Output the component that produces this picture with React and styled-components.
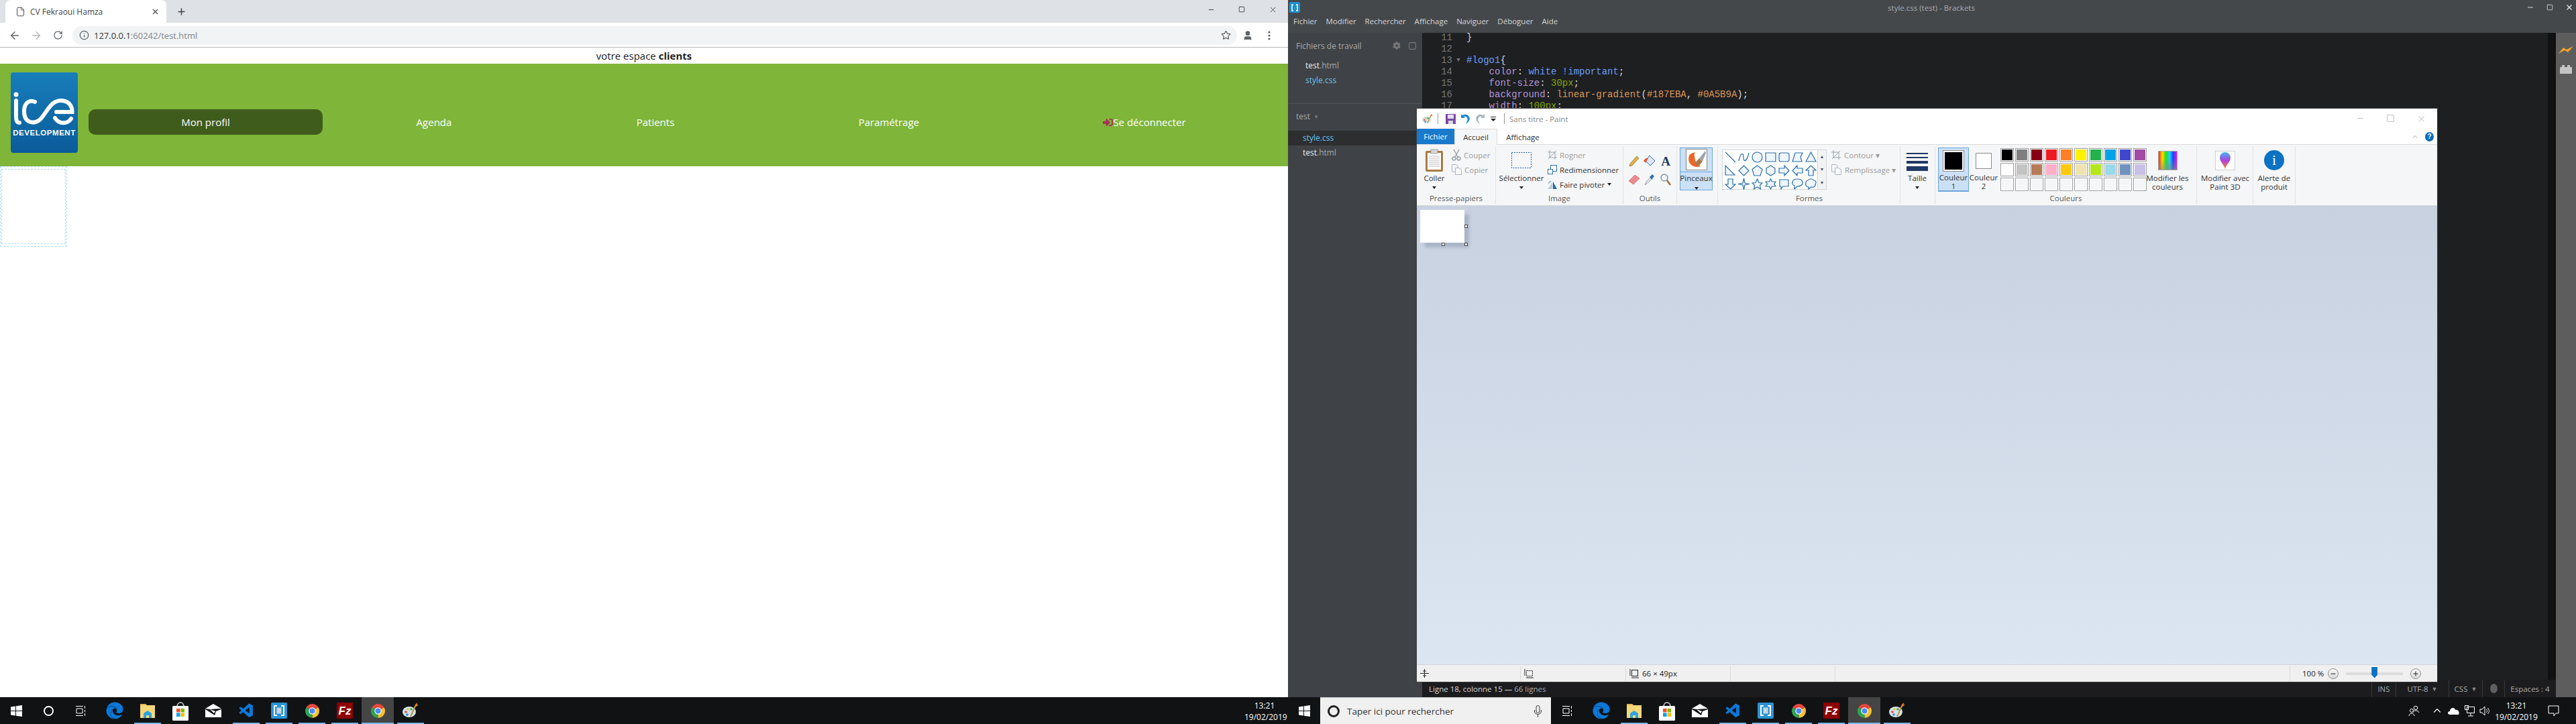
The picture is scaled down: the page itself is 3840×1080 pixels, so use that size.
import styled, { createGlobalStyle } from "styled-components";
import { ArrowLeft, ArrowRight, RotateCw, Info, Star, Plus, X, Minus, File, Square, ChevronUp, User } from "lucide-react";
import { FaEdge, FaSignInAlt, FaCog } from "react-icons/fa";
import { VscVscode } from "react-icons/vsc";

const GlobalStyle = createGlobalStyle`
  html, body { margin: 0; padding: 0; width: 3840px; height: 1080px; overflow: hidden; background: #000; }
  * { box-sizing: border-box; }
  body { font-family: "Open Sans", "Liberation Sans", sans-serif; }
`;

const Desktop = styled.div`
  display: flex;
  width: 3840px;
  height: 1080px;
`;
const Screen = styled.div`
  position: relative;
  width: 1920px;
  height: 1080px;
  display: flex;
  flex-direction: column;
`;

/* chrome window */
const ChromeWindow = styled.div`
  flex: 1;
  display: flex;
  flex-direction: column;
  background: #fff;
`;
const TabStrip = styled.div`
  height: 34px;
  background: #dee1e6;
  display: flex;
  align-items: flex-end;
  padding-left: 8px;
`;
const Tab = styled.div`
  width: 240px;
  height: 34px;
  background: #fff;
  border-radius: 8px 8px 0 0;
  display: flex;
  align-items: center;
  padding: 0 10px 0 15px;
  font-size: 12px;
  color: #444;
  gap: 7px;
  span { flex: 1; }
`;
const NewTab = styled.div`
  width: 44px;
  height: 34px;
  display: flex;
  align-items: center;
  justify-content: center;
  color: #444;
`;
const WinControls = styled.div`
  margin-left: auto;
  height: 34px;
  display: flex;
  align-items: center;
  padding-bottom: 6px;
  color: #333;
`;
const WinBtn = styled.div`
  width: 46px;
  display: flex;
  justify-content: center;
`;
const Toolbar = styled.div`
  height: 37px;
  padding: 4px 0 3px 6px;
  display: flex;
  align-items: center;
  border-bottom: 1px solid #b8b8b8;
  background: #fff;
`;
const NavIcon = styled.div`
  width: 32px;
  display: flex;
  justify-content: center;
  color: ${(p) => (p.$off ? "#b4b6b8" : "#5f6368")};
`;
const Omnibox = styled.div`
  margin-left: 6px;
  width: 1736px;
  height: 28px;
  border-radius: 14px;
  background: #f1f3f4;
  display: flex;
  align-items: center;
  padding: 0 9px 0 10px;
  font-size: 13px;
  color: #80868b;
  gap: 7px;
  b { font-weight: 400; color: #333; }
  span { flex: 1; }
`;
const Greeting = styled.div`
  height: 24px;
  line-height: 24px;
  text-align: center;
  font-size: 15px;
  color: #222;
  b { font-weight: 700; }
`;
const Header = styled.div`
  height: 153px;
  background: #7fb539;
  display: flex;
  padding: 13px 17px 0 16px;
`;
const Logo = styled.div`
  width: 100px;
  height: 120px;
  border-radius: 4px;
  background: linear-gradient(#187eba, #0a5b9a);
  display: flex;
  flex-direction: column;
  align-items: center;
  margin-right: 16px;
  span {
    font: 700 11.5px "Liberation Sans", sans-serif;
    letter-spacing: 0.55px;
    color: #fff;
    margin-top: 4px;
  }
`;
const Nav = styled.div`
  display: flex;
  margin-top: 55px;
  height: 38px;
`;
const NavItem = styled.div`
  width: ${(p) => p.$w}px;
  height: 38px;
  border-radius: 10px;
  background: ${(p) => (p.$active ? "#405c1c" : "transparent")};
  color: #fff;
  font-size: 15px;
  display: flex;
  align-items: center;
  justify-content: center;
`;
const DashOuter = styled.div`
  width: 100px;
  height: 120px;
  padding: 3px 1px;
  border: 1px dashed #a8ddfa;
`;
const DashInner = styled.div`
  height: 100%;
  border: 1px dashed #a8ddfa;
`;

/* brackets window */
const Brackets = styled.div`
  flex: 1;
  display: flex;
  flex-direction: column;
  background: #45484b;
  overflow: hidden;
`;
const TitleRow = styled.div`
  height: 22px;
  display: grid;
  grid-template-columns: 1fr auto 1fr;
  align-items: center;
  padding: 0 4px 0 2px;
  font-size: 11.5px;
  color: #a8abad;
`;
const BracketsBadge = styled.div`
  width: 16px;
  height: 16px;
  background: #1d8fd1;
  border-radius: 2px;
  display: flex;
  align-items: center;
  justify-content: center;
`;
const TitleControls = styled.div`
  display: flex;
  justify-content: flex-end;
  align-items: center;
  gap: 18px;
  padding-right: 0;
`;
const MenuRow = styled.div`
  height: 27px;
  display: flex;
  gap: 13px;
  padding: 0 0 9px 8px;
  align-items: center;
  font-size: 11.5px;
  color: #d4d6d8;
`;
const BracketsBody = styled.div`
  flex: 1;
  display: flex;
  min-height: 0;
`;
const Sidebar = styled.div`
  width: 200px;
  background: #3f4246;
  font-size: 12px;
  color: #a7aaad;
`;
const SideHead = styled.div`
  height: 38px;
  display: flex;
  align-items: center;
  padding: 0 8px 0 12px;
  span { flex: 1; }
  margin-bottom: 0;
`;
const FileRow = styled.div`
  height: 22px;
  line-height: 22px;
  padding-left: ${(p) => p.$indent}px;
  background: ${(p) => (p.$selected ? "#2d2e30" : "transparent")};
  color: ${(p) => (p.$css ? "#6bc3f0" : "#a8abad")};
  b { font-weight: 400; color: ${(p) => (p.$css ? "#6bc3f0" : "#f0f0f0")}; }
`;
const SideSep = styled.div`
  margin-top: 23px;
  border-top: 1px solid #525558;
  height: 41px;
  display: flex;
  align-items: center;
  padding: 0 0 4px 12px;
  gap: 5px;
  i { font-style: normal; font-size: 8px; color: #7b7e81; }
`;
const EditorCol = styled.div`
  flex: 1;
  display: flex;
  flex-direction: column;
  min-width: 0;
`;
const CodeRow = styled.div`
  flex: 1;
  display: flex;
  min-height: 0;
`;
const Code = styled.div`
  flex: 1;
  background: #1d1f21;
  font: 14px/17px "Liberation Mono", monospace;
  color: #d6d6d6;
  overflow: hidden;
`;
const CodeLine = styled.div`
  display: flex;
  height: 17px;
  white-space: pre;
  &:first-child { margin-top: -1px; }
`;
const LineNo = styled.div`
  width: 45px;
  text-align: right;
  color: #767676;
`;
const Fold = styled.div`
  width: 21px;
  text-align: center;
  font-size: 9px;
  color: #767676;
  padding-right: 3px;
`;
const Tok = styled.span`
  color: ${(p) => p.$c};
`;
const ScrollStrip = styled.div`
  width: 12px;
  background: #111;
`;
const StatusBar = styled.div`
  height: 26px;
  background: #1c1c1e;
  display: flex;
  align-items: center;
  font-size: 11.5px;
  color: #a8abad;
  padding-left: 10px;
  justify-content: space-between;
  b { font-weight: 400; color: #d8d8d8; }
`;
const StatusCells = styled.div`
  display: flex;
  height: 26px;
  margin-right: 1px;
`;
const StatusCell = styled.div`
  width: ${(p) => p.$w}px;
  border-left: 1px solid #36383a;
  display: flex;
  align-items: center;
  justify-content: center;
  gap: 5px;
  i { font-style: normal; font-size: 9px; color: #8a8a8a; }
`;
const RecDot = styled.div`
  width: 11px;
  height: 14px;
  border-radius: 50%;
  background: #5e5e5e;
`;
const SideTools = styled.div`
  width: 30px;
  background: #5d5d5d;
  display: flex;
  flex-direction: column;
  align-items: center;
  padding-top: 20px;
  gap: 16px;
`;

/* paint window, sits over brackets */
const Paint = styled.div`
  position: absolute;
  left: 192px;
  top: 162px;
  width: 1521px;
  height: 855px;
  background: #fff;
  display: flex;
  flex-direction: column;
  box-shadow: 0 0 0 1px #3a3a3a;
  font-size: 11.5px;
  color: #333;
`;
const PaintTitle = styled.div`
  height: 30px;
  display: flex;
  align-items: center;
  padding-left: 8px;
  color: #8a8a8a;
`;
const QatIcon = styled.div`
  width: ${(p) => p.$w || 22}px;
  display: flex;
  justify-content: center;
`;
const QatSep = styled.div`
  width: 1px;
  height: 16px;
  background: #9a9a9a;
  margin: 0 7px;
`;
const PaintControls = styled.div`
  margin-left: auto;
  display: flex;
  color: #8a8a8a;
  padding-right: 1px;
`;
const PaintCtl = styled.div`
  width: 45.5px;
  display: flex;
  justify-content: center;
`;
const PaintTabs = styled.div`
  height: 24px;
  display: flex;
  align-items: flex-end;
  border-bottom: 1px solid #dadbdc;
`;
const FileTab = styled.div`
  width: 56px;
  height: 23px;
  background: #1979ca;
  color: #fff;
  display: flex;
  align-items: center;
  justify-content: center;
`;
const PaintTab = styled.div`
  width: ${(p) => p.$w}px;
  height: 24px;
  margin-bottom: -1px;
  display: flex;
  align-items: center;
  justify-content: center;
  background: ${(p) => (p.$active ? "#f5f6f7" : "transparent")};
  border: ${(p) => (p.$active ? "1px solid #dadbdc" : "1px solid transparent")};
  border-bottom: 0;
`;
const HelpBox = styled.div`
  margin-left: auto;
  display: flex;
  align-items: center;
  gap: 9px;
  height: 23px;
  padding-right: 5px;
  color: #8a8a8a;
`;
const HelpDot = styled.div`
  width: 13px;
  height: 14px;
  border-radius: 50%;
  background: #0f6cbd;
  color: #fff;
  font: 700 10px/14px "Liberation Sans", sans-serif;
  text-align: center;
`;
const Ribbon = styled.div`
  height: 91px;
  display: flex;
  padding-top: 2px;
  background: #f5f6f7;
  border-bottom: 1px solid #dadbdc;
`;
const Group = styled.div`
  width: ${(p) => p.$w}px;
  height: 86px;
  display: flex;
  flex-direction: column;
  border-right: 1px solid #e2e3e4;
`;
const GroupBody = styled.div`
  height: 70px;
  display: flex;
  padding-top: 2px;
  padding-left: ${(p) => p.$pl || 0}px;
`;
const GroupLabel = styled.div`
  height: 16px;
  line-height: 16px;
  text-align: center;
  color: #5a5a5a;
  padding-left: ${(p) => p.$pl || 0}px;
`;
const BigButton = styled.div`
  width: ${(p) => p.$w}px;
  flex: none;
  display: flex;
  flex-direction: column;
  align-items: center;
  text-align: center;
  line-height: 13px;
  white-space: nowrap;
`;
const BigIcon = styled.div`
  height: 38.5px;
  display: flex;
  align-items: center;
  justify-content: center;
`;
const DropArrow = styled.div`
  width: 0;
  height: 0;
  margin-top: ${(p) => (p.$inline ? 0 : 6)}px;
  border: 3px solid transparent;
  border-top: 4px solid #222;
  border-bottom: 0;
`;
const SmallCol = styled.div`
  display: flex;
  flex-direction: column;
  margin-left: ${(p) => p.$ml || 0}px;
`;
const SmallRow = styled.div`
  height: 22px;
  display: flex;
  align-items: center;
  gap: ${(p) => p.$gap || 4}px;
  white-space: nowrap;
  color: ${(p) => (p.$off ? "#9c9c9c" : "#333")};
`;
const ToolGrid = styled.div`
  display: grid;
  grid-template-columns: repeat(3, 23.5px);
  grid-auto-rows: 28px;
  justify-items: center;
  align-items: center;
  margin: 6px 0 0 4px;
`;
const BrushBox = styled.div`
  width: 49px;
  height: 64px;
  margin-left: 4px;
  background: #cce0f5;
  border: 1px solid #6ba6dc;
  display: flex;
  flex-direction: column;
  align-items: center;
  text-align: center;
`;
const BrushPic = styled.div`
  width: 100%;
  height: 37px;
  border-bottom: 1px solid #6ba6dc;
  display: flex;
  align-items: center;
  justify-content: center;
  padding-bottom: 1px;
  margin-bottom: 1px;
`;
const ShapeBox = styled.div`
  width: 156px;
  height: 60px;
  margin: 3px 0 0 6px;
  display: flex;
  background: #fff;
  border: 1px solid #d4d6d8;
`;
const ShapeGrid = styled.div`
  flex: 1;
  display: grid;
  grid-template-columns: repeat(7, 20px);
  grid-auto-rows: 20px;
  justify-items: center;
  align-items: center;
  padding-left: 1px;
`;
const ShapeScroll = styled.div`
  width: 13px;
  border-left: 1px solid #d4d6d8;
  background: #f2f3f4;
  display: flex;
  flex-direction: column;
  align-items: center;
  justify-content: space-around;
  font-size: 7px;
  color: #555;
`;
const SizeLines = styled.div`
  width: 32px;
  margin-top: 4px;
  display: flex;
  flex-direction: column;
  gap: 4px;
`;
const SizeLine = styled.div`
  height: ${(p) => p.$h}px;
  background: #1f3864;
`;
const ColorSlot = styled.div`
  width: ${(p) => p.$w}px;
  flex: none;
  height: 66px;
  margin-left: ${(p) => p.$ml || 0}px;
  background: ${(p) => (p.$active ? "#cce0f5" : "transparent")};
  border: 1px solid ${(p) => (p.$active ? "#6ba6dc" : "transparent")};
  border-bottom-width: ${(p) => (p.$active ? 2 : 1)}px;
  display: flex;
  flex-direction: column;
  align-items: center;
  line-height: 13px;
  text-align: center;
  white-space: nowrap;
`;
const SlotSwatchArea = styled.div`
  height: 37px;
  display: flex;
  align-items: center;
`;
const SlotSwatch = styled.div`
  width: ${(p) => p.$w}px;
  height: ${(p) => p.$h}px;
  background: ${(p) => p.$c};
  border: 1px solid #8c8c8c;
  box-shadow: inset 0 0 0 2px #fff;
`;
const Palette = styled.div`
  display: grid;
  grid-template-columns: repeat(10, 20px);
  grid-auto-rows: 20px;
  gap: 2px;
  margin: 1px 0 0 3px;
  height: 64px;
`;
const Swatch = styled.div`
  background: ${(p) => p.$c};
  border: 1px solid #a0a0a0;
  box-shadow: inset 0 0 0 1px #fff;
`;
const PickerIcon = styled.div`
  width: 29px;
  height: 29px;
  border: 1px solid #a8a8a8;
  background: linear-gradient(#0000 40%, #88888899), linear-gradient(90deg, #ff2020, #ffe000, #20e020, #20d0ff, #2040ff, #e020e0);
`;
const Paint3dIcon = styled.div`
  width: 30px;
  height: 29px;
  background: #fff;
  border: 1px solid #d0d0d0;
  display: flex;
  align-items: center;
  justify-content: center;
`;
const AlertIcon = styled.div`
  width: 30px;
  height: 30px;
  border-radius: 50%;
  background: #0b72c4;
  color: #fff;
  font: 400 22px/30px "Liberation Serif", serif;
  text-align: center;
`;
const Canvas = styled.div`
  flex: 1;
  background: linear-gradient(#c8d1e0, #dce6f2);
  padding: 6px 0 0 5px;
  border-bottom: 1px solid #d4d6d8;
`;
const Sheet = styled.div`
  position: relative;
  width: 66px;
  height: 49px;
  background: #fff;
  box-shadow: 7px 7px 4px rgba(100, 112, 135, 0.3);
`;
const Handle = styled.div`
  position: absolute;
  width: 5px;
  height: 5px;
  left: ${(p) => p.$x}px;
  top: ${(p) => p.$y}px;
  background: #fff;
  border: 1px solid #444;
`;
const PaintStatus = styled.div`
  height: 25px;
  background: #f0f0f0;
  display: flex;
  align-items: center;
`;
const PaintCell = styled.div`
  width: ${(p) => p.$w}px;
  height: 23px;
  border-right: 1px solid #dcdcdc;
  display: flex;
  align-items: center;
  gap: 5px;
  padding-left: 5px;
  color: #222;
`;
const ZoomBox = styled.div`
  flex: 1;
  height: 23px;
  display: flex;
  align-items: center;
  padding-left: 18px;
  color: #222;
  white-space: nowrap;
`;
const ZoomBtn = styled.div`
  width: 16px;
  height: 16px;
  flex: none;
  margin-left: ${(p) => p.$ml || 0}px;
  border-radius: 50%;
  border: 1px solid #8f8f8f;
  background: linear-gradient(#f8f8f8, #d8d8d8);
  color: #444;
  display: flex;
  align-items: center;
  justify-content: center;
`;
const ZoomTrack = styled.div`
  position: relative;
  width: 85px;
  height: 4px;
  margin: 0 11px;
  background: #dcdcdc;
`;
const ZoomThumb = styled.div`
  position: absolute;
  left: 38px;
  top: -8px;
  width: 9px;
  height: 17px;
  background: #0b72c4;
  clip-path: polygon(0 0, 100% 0, 100% 70%, 50% 100%, 0 70%);
`;

/* taskbar */
const Taskbar = styled.div`
  height: 40px;
  background: #101214;
  display: flex;
  align-items: stretch;
  color: #fff;
  font-size: 12px;
`;
const TaskCell = styled.div`
  position: relative;
  width: ${(p) => p.$w || 48}px;
  flex: none;
  display: flex;
  align-items: center;
  justify-content: center;
  background: ${(p) => (p.$active ? "#454545" : "transparent")};
`;
const Underline = styled.div`
  position: absolute;
  left: ${(p) => (p.$active ? 0 : 4)}px;
  right: ${(p) => (p.$active ? 0 : 4)}px;
  bottom: 0;
  height: 2px;
  background: #76b9ed;
`;
const TaskApps = styled.div`
  display: flex;
  margin-left: 3px;
  gap: 1px;
`;
const Search = styled.div`
  width: 344px;
  background: #f0f0f0;
  border-top: 1px solid #c8c8c8;
  display: flex;
  align-items: center;
  padding: 0 14px 0 11px;
  gap: 11px;
  color: #333;
  font-size: 13.5px;
  span { flex: 1; }
`;
const SearchRing = styled.div`
  width: 18px;
  height: 18px;
  border-radius: 50%;
  border: 3px solid #222;
`;
const TaskRing = styled.div`
  width: 15px;
  height: 15px;
  border-radius: 50%;
  border: 2px solid #fff;
`;
const Clock = styled.div`
  width: ${(p) => p.$w}px;
  margin-left: ${(p) => (p.$auto ? "auto" : "0")};
  margin-right: ${(p) => p.$mr || 0}px;
  display: flex;
  flex-direction: column;
  justify-content: center;
  text-align: center;
  line-height: 17px;
  padding-top: 2px;
`;
const Tray = styled.div`
  margin-left: auto;
  display: flex;
  align-items: stretch;
  padding-right: 14px;
`;
const TrayCell = styled.div`
  width: ${(p) => p.$w}px;
  margin-left: ${(p) => p.$ml || 0}px;
  display: flex;
  align-items: center;
  justify-content: center;
`;

/* drawings */
const WinLogo = () => (
  <svg width="17" height="17" viewBox="0 0 17 17" fill="#fff">
    <path d="M0 2.4 7 1.4V8H0zM8 1.2 17 0V8H8zM0 9H7V15.6L0 14.6zM8 9H17V17L8 15.8z" />
  </svg>
);
const TaskView = () => (
  <svg width="17" height="17" viewBox="0 0 17 17" fill="none" stroke="#fff" strokeWidth="1">
    <path d="M1 1.5H12M1 15.5H12M2 5H11V12H2zM14.5 1V5M14.5 7V10M14.5 12V16" />
  </svg>
);
const FolderIcon = () => (
  <svg width="24" height="26" viewBox="0 0 24 26">
    <path d="M1 3H9L11 5H23V24H1z" fill="#f5d77a" />
    <path d="M1 3H9L10 5H1z" fill="#e5b74a" />
    <path d="M6 24V17L12 13L18 17V24H14V20H10V24z" fill="#2fa4dc" />
  </svg>
);
const StoreIcon = () => (
  <svg width="24" height="29" viewBox="0 0 24 29">
    <path d="M7 8C7 0 17 0 17 8" fill="none" stroke="#ddd" strokeWidth="1.5" />
    <rect y="7" width="24" height="22" rx="1.5" fill="#fff" />
    <rect x="6" y="11" width="5.5" height="5.5" fill="#f25022" />
    <rect x="12.5" y="11" width="5.5" height="5.5" fill="#7fba00" />
    <rect x="6" y="17.5" width="5.5" height="5.5" fill="#00a4ef" />
    <rect x="12.5" y="17.5" width="5.5" height="5.5" fill="#ffb900" />
  </svg>
);
const MailIcon = () => (
  <svg width="24" height="20" viewBox="0 0 24 20">
    <path d="M0 7 12 0 24 7 7 8 15 11 13 14 7 8 0 7z" fill="#fff" />
    <path d="M0 8 14 17 16 11 24 8V20H0z" fill="#fff" />
  </svg>
);
const BracketsIcon = () => (
  <svg width="24" height="24" viewBox="0 0 24 24">
    <rect width="24" height="24" rx="2" fill="#2a93d5" />
    <path d="M9 5H5V19H9M15 5H19V19H15" fill="none" stroke="#fff" strokeWidth="2" />
    <rect x="8.5" y="7.5" width="7" height="9" fill="#ccd6dd" />
  </svg>
);
const ChromeIcon = () => (
  <svg width="23" height="23" viewBox="0 0 24 24">
    <path d="M12 12 2.5 6.5A11 11 0 0 1 21.5 6.5z" fill="#e8453c" />
    <path d="M12 12 21.5 6.5A11 11 0 0 1 12 23z" fill="#f9c02d" />
    <path d="M12 12 12 23A11 11 0 0 1 2.5 6.5z" fill="#2fa44f" />
    <circle cx="12" cy="12" r="5.4" fill="#fff" />
    <circle cx="12" cy="12" r="4.2" fill="#4c8bf5" />
  </svg>
);
const ZillaIcon = () => (
  <svg width="24" height="24" viewBox="0 0 24 24">
    <rect width="24" height="24" fill="#8f0000" />
    <text x="12" y="18" textAnchor="middle" fontFamily="Liberation Sans" fontStyle="italic" fontWeight="700" fontSize="17" fill="#fff">Fz</text>
  </svg>
);
const PaletteIcon = ({ size = 24 }) => (
  <svg width={size} height={size} viewBox="0 0 24 24">
    <ellipse cx="10" cy="14" rx="10" ry="8" fill="#cfe3ee" />
    <circle cx="5" cy="14" r="1.8" fill="#e2483d" />
    <circle cx="8" cy="10" r="1.8" fill="#f3c02f" />
    <circle cx="13" cy="10" r="1.8" fill="#3ba55c" />
    <circle cx="7" cy="18" r="1.8" fill="#3a80d2" />
    <path d="M12 21 20 3" stroke="#c8923e" strokeWidth="2" />
    <path d="M19 4 21 0 23 4 21 6z" fill="#e0722c" />
  </svg>
);
const SaveIcon = () => (
  <svg width="15" height="15" viewBox="0 0 15 15">
    <rect width="15" height="15" fill="#7a4aa5" />
    <rect x="3" y="1" width="9" height="6" fill="#eadcf3" />
    <rect x="4" y="10" width="7" height="5" fill="#d8d8d8" />
  </svg>
);
const UndoIcon = ({ c, flip }) => (
  <svg width="15" height="17" viewBox="0 0 15 17" style={flip ? { transform: "scaleX(-1)" } : undefined}>
    <path d="M1 1V7H7L5 5C8 4 12 6 10 12L8 16C14 13 16 6 11 3 8 1 5 2 3 3z" fill={c} />
  </svg>
);
const ClipboardIcon = () => (
  <svg width="26" height="34" viewBox="0 0 26 34">
    <rect y="3" width="26" height="31" rx="2" fill="#a87b46" />
    <rect x="3" y="6" width="20" height="25" fill="#fff" />
    <path d="M5 11H21M5 14H21M5 17H21M5 20H21M5 23H21M5 26H21" stroke="#b8b8b8" />
    <rect x="8" y="1" width="10" height="6" fill="#d8d8d8" stroke="#888" strokeWidth="0.7" />
  </svg>
);
const CutIcon = () => (
  <svg width="14" height="18" viewBox="0 0 14 18" fill="none" stroke="#9aa5b1" strokeWidth="1.5">
    <path d="M3 1 9 12M11 1 5 12" />
    <circle cx="3.5" cy="14.5" r="2.5" />
    <circle cx="10.5" cy="14.5" r="2.5" />
  </svg>
);
const CopyIcon = () => (
  <svg width="15" height="16" viewBox="0 0 15 16" fill="#f6f8fa" stroke="#aab6c4">
    <path d="M.5.5H7L9 3V11H.5z" />
    <path d="M5.5 5.5H11L14.5 8V15.5H5.5z" />
  </svg>
);
const CropIcon = () => (
  <svg width="14" height="14" viewBox="0 0 14 14" fill="none" stroke="#9aa5b1">
    <path d="M3 0V11H14M0 3H11V14M1 13 13 1" />
  </svg>
);
const ResizeIcon = () => (
  <svg width="14" height="14" viewBox="0 0 14 14" fill="#fff" stroke="#2a6eab">
    <rect x="4.5" y=".5" width="9" height="9" />
    <rect x=".5" y="6.5" width="7" height="7" />
  </svg>
);
const RotateIcon = () => (
  <svg width="14" height="15" viewBox="0 0 16 15">
    <path d="M0 15 8 4V15z" fill="#c4cbd3" />
    <path d="M16 15 9 2V15z" fill="#1f6cb0" />
    <path d="M2 6C2 3 4 2 6 2" stroke="#1f6cb0" fill="none" />
  </svg>
);
const SelectIcon = () => (
  <svg width="30" height="24" viewBox="0 0 30 24">
    <rect x=".5" y=".5" width="29" height="23" fill="none" stroke="#1f5fa8" strokeDasharray="2 1.5" />
  </svg>
);
const BrushIcon = () => (
  <svg width="32" height="32" viewBox="0 0 32 32">
    <rect x=".5" y=".5" width="31" height="31" fill="#fff" stroke="#888" />
    <path d="M5 10C1 22 12 30 22 26L14 18C14 12 11 8 14 5 9 6 6 8 5 10z" fill="#e8682a" />
    <path d="M13 22 20 14 25 19 19 26z" fill="#a97a4f" />
    <path d="M20 14 29 3 30 6 25 19z" fill="#9aa6b3" />
  </svg>
);

const shapeStroke = "#2a6eab";
const ShapeIcon = ({ d, fill = "#eef5fb" }) => (
  <svg width="17" height="17" viewBox="0 0 17 17" fill={fill} stroke={shapeStroke} strokeWidth="1.2">
    <path d={d} />
  </svg>
);
const shapes = [
  ["M1 1 16 16", "none"],
  ["M1 14C4 0 8 2 8 9S13 16 16 2", "none"],
  ["M16 8.5A7.5 7.5 0 1 1 1 8.5 7.5 7.5 0 1 1 16 8.5z"],
  ["M1 2H16V15H1z"],
  ["M4 2H13Q16 2 16 5V12Q16 15 13 15H4Q1 15 1 12V5Q1 2 4 2z"],
  ["M5 2H16L13 8 15 15H1z"],
  ["M8.5 1 16 15H1z"],
  ["M1 1V15H15z"],
  ["M8.5 1 16 8.5 8.5 16 1 8.5z"],
  ["M8.5 1 16 6.5 13 16H4L1 6.5z"],
  ["M8.5 1 15 5V12L8.5 16 2 12V5z"],
  ["M1 5H9V1L16 8.5 9 16V12H1z"],
  ["M16 5H8V1L1 8.5 8 16V12H16z"],
  ["M5 16V8H1L8.5 1 16 8H12V16z"],
  ["M5 1V9H1L8.5 16 16 9H12V1z"],
  ["M8.5 0 10 7 17 8.5 10 10 8.5 17 7 10 0 8.5 7 7z"],
  ["M8.5 1 11 6.5 16 7 12.5 10.5 13.5 16 8.5 13 3.5 16 4.5 10.5 1 7 6 6.5z"],
  ["M8.5 1 10.5 5H16L13.5 8.5 16 12H10.5L8.5 16 6.5 12H1L3.5 8.5 1 5H6.5z"],
  ["M2 2H15V12H7L4 16V12H2z"],
  ["M8.5 1C15 1 17 5 16 8 15 11 11 12 8 12L4 16V11C1 10 0 7 1 5 2 2 5 1 8.5 1z"],
  ["M4 3C6 0 11 0 13 3 16 3 17 7 15 9 16 12 12 14 9 13L5 16V13C2 13 0 10 1 8 0 6 2 3 4 3z"],
];

const LogoMark = () => (
  <svg width="100" height="80" viewBox="0 0 100 80" fill="none" stroke="#fff" strokeWidth="6" strokeLinecap="round">
    <circle cx="8" cy="33" r="3.5" fill="#fff" stroke="none" />
    <path d="M8 42V66C8 72 10 75 13 75" />
    <path d="M36 44C30 41 20 43 20 58 20 76 35 78 44 70 50 64 56 52 62 47 72 38 92 41 91.500 59H68" />
    <path d="M66 68C72 78 85 77 90 69" />
  </svg>
);

const taskApps = [
  { key: "edge", icon: <FaEdge size={26} color="#0a78d7" /> },
  { key: "folder", icon: <FolderIcon />, on: true },
  { key: "store", icon: <StoreIcon /> },
  { key: "mail", icon: <MailIcon /> },
  { key: "vs", icon: <VscVscode size={25} color="#0a78d7" />, on: true },
  { key: "brackets", icon: <BracketsIcon />, on: true },
  { key: "chrome", icon: <ChromeIcon />, on: true },
  { key: "zilla", icon: <ZillaIcon />, on: true },
  { key: "chrome2", icon: <ChromeIcon />, on: true, active: true },
  { key: "paint", icon: <PaletteIcon />, on: true },
];

const TaskIcons = () => (
  <TaskApps>
    {taskApps.map((app) => (
      <TaskCell key={app.key} $active={app.active}>
        {app.icon}
        {app.on && <Underline $active={app.active} />}
      </TaskCell>
    ))}
  </TaskApps>
);

const purple = "#b294d8";
const blue = "#6c9ef8";
const green = "#85a300";
const orange = "#dc9656";
const codeLines = [
  { n: 11, t: [["}", "#d6d6d6"]] },
  { n: 12, t: [] },
  { n: 13, fold: true, t: [["#logo1", blue], ["{", "#d6d6d6"]] },
  { n: 14, t: [["    color", purple], [": ", "#d6d6d6"], ["white !important", blue], [";", "#d6d6d6"]] },
  { n: 15, t: [["    font-size", purple], [": ", "#d6d6d6"], ["30px", green], [";", "#d6d6d6"]] },
  { n: 16, t: [["    background", purple], [": ", "#d6d6d6"], ["linear-gradient", orange], ["(", "#d6d6d6"], ["#187EBA", orange], [", ", "#d6d6d6"], ["#0A5B9A", orange], [");", "#d6d6d6"]] },
  { n: 17, t: [["    width", purple], [": ", "#d6d6d6"], ["100px", green], [";", "#d6d6d6"]] },
];

const paletteColors = [
  "#000000", "#7f7f7f", "#880015", "#ed1c24", "#ff7f27", "#fff200", "#22b14c", "#00a2e8", "#3f48cc", "#a349a4",
  "#ffffff", "#c3c3c3", "#b97a57", "#ffaec9", "#ffc90e", "#efe4b0", "#b5e61d", "#99d9ea", "#7092be", "#c8bfe7",
  ...Array(10).fill("#f5f6f7"),
];

export default function App() {
  return (
    <Desktop>
      <GlobalStyle />
      <Screen>
        <ChromeWindow>
          <TabStrip>
            <Tab>
              <File size={15} strokeWidth={1.5} />
              <span>CV Fekraoui Hamza</span>
              <X size={13} />
            </Tab>
            <NewTab>
              <Plus size={15} strokeWidth={2.5} />
            </NewTab>
            <WinControls>
              <WinBtn><Minus size={11} /></WinBtn>
              <WinBtn><Square size={10} /></WinBtn>
              <WinBtn><X size={13} strokeWidth={1.5} /></WinBtn>
            </WinControls>
          </TabStrip>
          <Toolbar>
            <NavIcon><ArrowLeft size={18} /></NavIcon>
            <NavIcon $off><ArrowRight size={18} /></NavIcon>
            <NavIcon><RotateCw size={15} /></NavIcon>
            <Omnibox>
              <Info size={15} color="#5f6368" />
              <span><b>127.0.0.1</b>:60242/test.html</span>
              <Star size={15} color="#5f6368" />
            </Omnibox>
            <NavIcon><User size={16} fill="#5f6368" /></NavIcon>
            <NavIcon>
              <svg width="4" height="14" viewBox="0 0 4 14" fill="#5f6368">
                <circle cx="2" cy="2" r="1.6" /><circle cx="2" cy="7" r="1.6" /><circle cx="2" cy="12" r="1.6" />
              </svg>
            </NavIcon>
          </Toolbar>
          <Greeting>votre espace <b>clients</b></Greeting>
          <Header>
            <Logo>
              <LogoMark />
              <span>DEVELOPMENT</span>
            </Logo>
            <Nav>
              <NavItem $w={349} $active>Mon profil</NavItem>
              <NavItem $w={332}>Agenda</NavItem>
              <NavItem $w={328}>Patients</NavItem>
              <NavItem $w={368}>Paramétrage</NavItem>
              <NavItem $w={394}><FaSignInAlt size={15} color="#a83256" />Se déconnecter</NavItem>
            </Nav>
          </Header>
          <DashOuter><DashInner /></DashOuter>
        </ChromeWindow>
        <Taskbar>
          <TaskCell><WinLogo /></TaskCell>
          <TaskCell><TaskRing /></TaskCell>
          <TaskCell><TaskView /></TaskCell>
          <TaskIcons />
          <Clock $w={60} $auto $mr={5}>
            <div>13:21</div>
            <div>19/02/2019</div>
          </Clock>
        </Taskbar>
      </Screen>

      <Screen>
        <Brackets>
          <TitleRow>
            <BracketsBadge>
              <svg width="10" height="11" viewBox="0 0 10 11" fill="none" stroke="#fff" strokeWidth="1.5">
                <path d="M3 1H1V10H3M7 1H9V10H7" />
              </svg>
            </BracketsBadge>
            <div>style.css (test) - Brackets</div>
            <TitleControls>
              <Minus size={12} color="#ddd" />
              <Square size={10} color="#ddd" />
              <X size={12} color="#ddd" strokeWidth={3} />
            </TitleControls>
          </TitleRow>
          <MenuRow>
            <div>Fichier</div>
            <div>Modifier</div>
            <div>Rechercher</div>
            <div>Affichage</div>
            <div>Naviguer</div>
            <div>Déboguer</div>
            <div>Aide</div>
          </MenuRow>
          <BracketsBody>
            <Sidebar>
              <SideHead>
                <span>Fichiers de travail</span>
                <FaCog size={12} color="#777" style={{ marginRight: 11 }} />
                <Square size={13} color="#777" />
              </SideHead>
              <FileRow $indent={26}><b>test</b>.html</FileRow>
              <FileRow $indent={26} $css><b>style</b>.css</FileRow>
              <SideSep>test <i>▼</i></SideSep>
              <FileRow $indent={22} $css $selected><b>style</b>.css</FileRow>
              <FileRow $indent={22}><b>test</b>.html</FileRow>
            </Sidebar>
            <EditorCol>
              <CodeRow>
                <Code>
                  {codeLines.map((line) => (
                    <CodeLine key={line.n}>
                      <LineNo>{line.n}</LineNo>
                      <Fold>{line.fold ? "▼" : ""}</Fold>
                      <div>
                        {line.t.map(([text, c], i) => (
                          <Tok key={i} $c={c}>{text}</Tok>
                        ))}
                      </div>
                    </CodeLine>
                  ))}
                </Code>
                <ScrollStrip />
              </CodeRow>
              <StatusBar>
                <div><b>Ligne 18, colonne 15 —</b> 66 lignes</div>
                <StatusCells>
                  <StatusCell $w={36}>INS</StatusCell>
                  <StatusCell $w={79}>UTF-8 <i>▼</i></StatusCell>
                  <StatusCell $w={50}>CSS <i>▼</i></StatusCell>
                  <StatusCell $w={33}><RecDot /></StatusCell>
                  <StatusCell $w={76}>Espaces : 4</StatusCell>
                </StatusCells>
              </StatusBar>
            </EditorCol>
            <SideTools>
              <svg width="22" height="12" viewBox="0 0 22 12">
                <path d="M0 11 7 2 12 5 22 0 14 9 9 6z" fill="#f5a623" />
              </svg>
              <svg width="18" height="13" viewBox="0 0 18 13" fill="#c4c4c4">
                <rect y="3" width="18" height="10" rx="1" />
                <rect x="3" width="4" height="4" rx="1" />
                <rect x="11" width="4" height="4" rx="1" />
              </svg>
            </SideTools>
          </BracketsBody>
        </Brackets>

        <Paint>
          <PaintTitle>
            <QatIcon $w={16}><PaletteIcon size={17} /></QatIcon>
            <QatSep />
            <QatIcon><SaveIcon /></QatIcon>
            <QatIcon><UndoIcon c="#1e88d8" /></QatIcon>
            <QatIcon><UndoIcon c="#a9b7c4" flip /></QatIcon>
            <QatIcon $w={18}>
              <svg width="8" height="8" viewBox="0 0 8 8"><path d="M0 1H8V2H0zM0 4H8L4 8z" fill="#222" /></svg>
            </QatIcon>
            <QatSep />
            <span>Sans titre - Paint</span>
            <PaintControls>
              <PaintCtl><Minus size={13} strokeWidth={1} /></PaintCtl>
              <PaintCtl><Square size={13} strokeWidth={1} /></PaintCtl>
              <PaintCtl><X size={15} strokeWidth={1} /></PaintCtl>
            </PaintControls>
          </PaintTitle>
          <PaintTabs>
            <FileTab>Fichier</FileTab>
            <PaintTab $w={64} $active>Accueil</PaintTab>
            <PaintTab $w={76}>Affichage</PaintTab>
            <HelpBox>
              <ChevronUp size={12} strokeWidth={1.5} />
              <HelpDot>?</HelpDot>
            </HelpBox>
          </PaintTabs>
          <Ribbon>
            <Group $w={118}>
              <GroupBody>
                <BigButton $w={52}>
                  <BigIcon><ClipboardIcon /></BigIcon>
                  Coller
                  <DropArrow />
                </BigButton>
                <SmallCol>
                  <SmallRow $off><CutIcon />Couper</SmallRow>
                  <SmallRow $off><CopyIcon />Copier</SmallRow>
                </SmallCol>
              </GroupBody>
              <GroupLabel>Presse-papiers</GroupLabel>
            </Group>
            <Group $w={190}>
              <GroupBody $pl={1}>
                <BigButton $w={74}>
                  <BigIcon><SelectIcon /></BigIcon>
                  Sélectionner
                  <DropArrow />
                </BigButton>
                <SmallCol $ml={2}>
                  <SmallRow $off><CropIcon />Rogner</SmallRow>
                  <SmallRow><ResizeIcon />Redimensionner</SmallRow>
                  <SmallRow><RotateIcon />Faire pivoter <DropArrow $inline /></SmallRow>
                </SmallCol>
              </GroupBody>
              <GroupLabel>Image</GroupLabel>
            </Group>
            <Group $w={80}>
              <GroupBody>
                <ToolGrid>
                  <svg width="16" height="17" viewBox="0 0 16 17"><path d="M1 16 2 12 12 1 15 4 5 15z" fill="#e6b23c" stroke="#555" strokeWidth=".6" /></svg>
                  <svg width="18" height="18" viewBox="0 0 18 18"><path d="M9 1 17 9 10 16 3 9z" fill="#dbe7f3" stroke="#2a6eab" /><path d="M0 9C2 5 5 4 7 5L3 12z" fill="#e8582a" /></svg>
                  <svg width="16" height="16" viewBox="0 0 16 16"><text x="8" y="15" textAnchor="middle" fontFamily="Liberation Serif" fontWeight="700" fontSize="19" fill="#1f3864">A</text></svg>
                  <svg width="18" height="16" viewBox="0 0 18 16"><path d="M1 10 10 1 17 6 8 15z" fill="#ee8a90" stroke="#b85a60" strokeWidth=".6" /></svg>
                  <svg width="16" height="18" viewBox="0 0 16 18"><path d="M1 17 3 12 9 6 11 8 5 14z" fill="#dfe7ef" stroke="#666" strokeWidth=".6" /><path d="M9 4 12 1 15 4 12 7 13 9 11 8 8 5z" fill="#2a6eab" /></svg>
                  <svg width="16" height="18" viewBox="0 0 16 18" fill="none"><circle cx="6" cy="6" r="5" stroke="#8a97a5" strokeWidth="1.5" fill="#eef5fb" /><path d="M10 10 15 17" stroke="#9a6a3a" strokeWidth="2.4" /></svg>
                </ToolGrid>
              </GroupBody>
              <GroupLabel>Outils</GroupLabel>
            </Group>
            <Group $w={61}>
              <GroupBody>
                <BrushBox>
                  <BrushPic><BrushIcon /></BrushPic>
                  Pinceaux
                  <DropArrow />
                </BrushBox>
              </GroupBody>
              <GroupLabel />
            </Group>
            <Group $w={272}>
              <GroupBody>
                <ShapeBox>
                  <ShapeGrid>
                    {shapes.map(([d, fill], i) => (
                      <ShapeIcon key={i} d={d} fill={fill} />
                    ))}
                  </ShapeGrid>
                  <ShapeScroll>
                    <span>▲</span>
                    <span>▼</span>
                    <span>▼</span>
                  </ShapeScroll>
                </ShapeBox>
                <SmallCol $ml={7}>
                  <SmallRow $off $gap={5}><CropIcon />Contour ▾</SmallRow>
                  <SmallRow $off $gap={5}><CopyIcon />Remplissage ▾</SmallRow>
                </SmallCol>
              </GroupBody>
              <GroupLabel $pl={1}>Formes</GroupLabel>
            </Group>
            <Group $w={52}>
              <GroupBody>
                <BigButton $w={50}>
                  <BigIcon>
                    <SizeLines>
                      <SizeLine $h={2} />
                      <SizeLine $h={2} />
                      <SizeLine $h={4} />
                      <SizeLine $h={7} />
                    </SizeLines>
                  </BigIcon>
                  Taille
                  <DropArrow />
                </BigButton>
              </GroupBody>
              <GroupLabel />
            </Group>
            <Group $w={390}>
              <GroupBody>
                <ColorSlot $w={46} $ml={4} $active>
                  <SlotSwatchArea><SlotSwatch $w={32} $h={32} $c="#000" /></SlotSwatchArea>
                  Couleur<br />1
                </ColorSlot>
                <ColorSlot $w={44}>
                  <SlotSwatchArea><SlotSwatch $w={24} $h={24} $c="#fff" /></SlotSwatchArea>
                  Couleur<br />2
                </ColorSlot>
                <Palette>
                  {paletteColors.map((c, i) => (
                    <Swatch key={i} $c={c} />
                  ))}
                </Palette>
                <BigButton $w={62}>
                  <BigIcon><PickerIcon /></BigIcon>
                  Modifier les<br />couleurs
                </BigButton>
              </GroupBody>
              <GroupLabel>Couleurs</GroupLabel>
            </Group>
            <Group $w={84}>
              <GroupBody>
                <BigButton $w={84}>
                  <BigIcon>
                    <Paint3dIcon>
                      <svg width="16" height="25" viewBox="0 0 16 25">
                        <defs>
                          <linearGradient id="p3d" x1="0" y1="0" x2="0" y2="1">
                            <stop offset="0" stopColor="#3fb8f0" />
                            <stop offset=".5" stopColor="#b040e0" />
                            <stop offset="1" stopColor="#f08a20" />
                          </linearGradient>
                        </defs>
                        <path d="M8 25C6 18 0 14 0 8 0 3 4 0 8 0S16 3 16 8C16 14 10 18 8 25z" fill="url(#p3d)" />
                      </svg>
                    </Paint3dIcon>
                  </BigIcon>
                  Modifier avec<br />Paint 3D
                </BigButton>
              </GroupBody>
              <GroupLabel />
            </Group>
            <Group $w={63}>
              <GroupBody>
                <BigButton $w={62}>
                  <BigIcon><AlertIcon>i</AlertIcon></BigIcon>
                  Alerte de<br />produit
                </BigButton>
              </GroupBody>
              <GroupLabel />
            </Group>
          </Ribbon>
          <Canvas>
            <Sheet>
              <Handle $x={66} $y={22} />
              <Handle $x={32} $y={49} />
              <Handle $x={66} $y={49} />
            </Sheet>
          </Canvas>
          <PaintStatus>
            <PaintCell $w={155}>
              <svg width="13" height="13" viewBox="0 0 13 13" fill="none" stroke="#222"><path d="M6.500 0V13M0 6.500H13M4 3H9M4 10H9" /></svg>
            </PaintCell>
            <PaintCell $w={157}>
              <svg width="14" height="14" viewBox="0 0 14 14" fill="none" stroke="#222"><rect x="3.500" y="2.500" width="9" height="8" strokeDasharray="2 1" /><path d="M1 0V10M3 13H14" /></svg>
            </PaintCell>
            <PaintCell $w={156}>
              <svg width="14" height="14" viewBox="0 0 14 14" fill="none" stroke="#222"><rect x="3.500" y="1.500" width="9" height="9" /><path d="M1 0V10M3 13H14" /></svg>
              66 × 49px
            </PaintCell>
            <PaintCell $w={156} />
            <PaintCell $w={678} />
            <ZoomBox>
              100 %
              <ZoomBtn $ml={6}><Minus size={10} strokeWidth={3} /></ZoomBtn>
              <ZoomTrack><ZoomThumb /></ZoomTrack>
              <ZoomBtn><Plus size={10} strokeWidth={3} /></ZoomBtn>
            </ZoomBox>
          </PaintStatus>
        </Paint>

        <Taskbar>
          <TaskCell><WinLogo /></TaskCell>
          <Search>
            <SearchRing />
            <span>Taper ici pour rechercher</span>
            <svg width="11" height="18" viewBox="0 0 11 18" fill="none" stroke="#333"><rect x="3" y=".5" width="5" height="11" rx="2.500" /><path d="M.5 7V9C.5 15 10.500 15 10.500 9V7M5.500 14V18" /></svg>
          </Search>
          <TaskCell><TaskView /></TaskCell>
          <TaskIcons />
          <Tray>
            <TrayCell $w={24}>
              <svg width="17" height="17" viewBox="0 0 17 17" fill="none" stroke="#fff"><circle cx="11" cy="4" r="2.800" /><path d="M7 11C7 7 15 7 16 11" /><circle cx="5" cy="8" r="2.500" /><path d="M1 16C1 11 9 11 9 16" /></svg>
            </TrayCell>
            <TrayCell $w={24} $ml={11}><ChevronUp size={18} color="#fff" strokeWidth={1.5} /></TrayCell>
            <TrayCell $w={24}>
              <svg width="17" height="12" viewBox="0 0 17 12" fill="#fff"><path d="M3 12C-1 12-1 7 3 7 3 2 10 0 11 5 15 4 18 8 16 12z" /></svg>
            </TrayCell>
            <TrayCell $w={23}>
              <svg width="16" height="17" viewBox="0 0 16 17" fill="none" stroke="#fff"><rect x="1.500" y=".5" width="5" height="6" /><rect x="4.500" y="2.500" width="11" height="9" /><path d="M10 11.500V16M6 16H14" /></svg>
            </TrayCell>
            <TrayCell $w={24}>
              <svg width="17" height="17" viewBox="0 0 17 17" fill="none" stroke="#fff"><path d="M1 6H4L8 2V15L4 11H1zM10.500 6C12 8 12 9 10.500 11M12.500 4C15 7 15 10 12.500 13" /></svg>
            </TrayCell>
            <Clock $w={70}>
              <div>13:21</div>
              <div>19/02/2019</div>
            </Clock>
            <TrayCell $w={40}>
              <svg width="17" height="17" viewBox="0 0 17 17" fill="none" stroke="#fff"><path d="M1 1H16V12H12L9 16V12H1z" /></svg>
            </TrayCell>
          </Tray>
        </Taskbar>
      </Screen>
    </Desktop>
  );
}
